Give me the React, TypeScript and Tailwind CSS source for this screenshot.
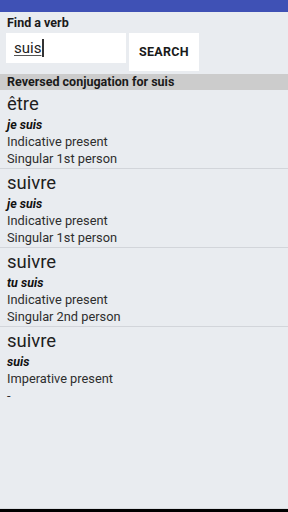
const results = [
  { verb: 'être', form: 'je suis', tense: 'Indicative present', person: 'Singular 1st person' },
  { verb: 'suivre', form: 'je suis', tense: 'Indicative present', person: 'Singular 1st person' },
  { verb: 'suivre', form: 'tu suis', tense: 'Indicative present', person: 'Singular 2nd person' },
  { verb: 'suivre', form: 'suis', tense: 'Imperative present', person: '-' },
]

export default function App() {
  return (
    <div className="h-[512px] w-[288px] flex flex-col bg-[#e9ecf0] font-['Roboto',sans-serif] overflow-hidden">
      <div className="h-[12px] bg-[#3f51b5] shrink-0" />
      <div className="flex-1">
        <div className="px-[7px] pt-[2px] text-[12.5px] leading-[17px] font-bold text-[#1a1a1a]">Find a verb</div>
        <div className="flex items-start gap-[3px] pl-[6px] mt-[2px]">
          <div className="w-[120px] h-[30px] bg-white flex items-center pl-[8px]">
            <span className="text-[15px] text-[#222] underline decoration-[#555] underline-offset-2">suis</span>
            <span className="w-[2px] h-[18px] bg-[#333] ml-[1px]" />
          </div>
          <button type="button" className="w-[70px] h-[38px] bg-white text-[12.5px] font-bold text-[#1a1a1a] tracking-wide flex items-center justify-center">
            SEARCH
          </button>
        </div>
        <div className="mt-[3px] h-[16px] bg-[#cccccc] px-[7px] text-[12.5px] leading-[16px] font-bold text-[#1a1a1a]">
          Reversed conjugation for suis
        </div>
        {results.map((r, i) => (
          <div key={i} className={`px-[7px] pt-[2px] pb-[1px] ${i < results.length - 1 ? 'border-b border-[#d2d5da]' : ''}`}>
            <div className="text-[18.5px] leading-[24px] text-[#1e1e1e]">{r.verb}</div>
            <div className="text-[12.5px] leading-[17px] font-bold italic text-[#111]">{r.form}</div>
            <div className="text-[12.8px] leading-[17px] text-[#2e2e2e]">{r.tense}</div>
            <div className="text-[12.8px] leading-[17px] text-[#2e2e2e]">{r.person}</div>
          </div>
        ))}
      </div>
      <div className="h-[1px] bg-[#d9dce0] shrink-0" />
      <div className="h-[3px] bg-black shrink-0" />
    </div>
  )
}
